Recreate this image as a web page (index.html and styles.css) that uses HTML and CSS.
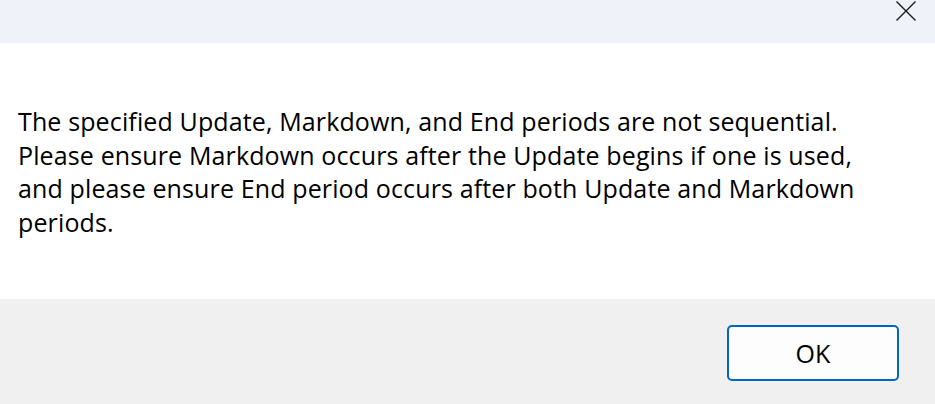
FILE: index.html
```html
<!DOCTYPE html>
<html>
<head>
<meta charset="utf-8">
<link rel="stylesheet" href="styles.css">
</head>
<body>
<div class="dialog">
  <div class="titlebar">
    <button class="close" aria-label="Close">
      <svg width="22" height="22" viewBox="0 0 22 22"><path d="M1.5 1.5 L20.5 20.5 M20.5 1.5 L1.5 20.5" stroke="#1b1b1b" stroke-width="1.4" fill="none"/></svg>
    </button>
  </div>
  <div class="content">
    <p class="message">The specified Update, Markdown, and End periods are not sequential.<br>Please ensure Markdown occurs after the Update begins if one is used,<br>and please ensure End period occurs after both Update and Markdown<br>periods.</p>
  </div>
  <div class="footer">
    <button class="ok">OK</button>
  </div>
</div>
</body>
</html>
```
FILE: styles.css
```css
html, body {
  margin: 0;
  padding: 0;
  width: 935px;
  height: 404px;
  overflow: hidden;
  background: #ffffff;
}
.dialog {
  display: flex;
  flex-direction: column;
  height: 404px;
  font-family: "Open Sans", "Noto Sans", sans-serif;
  color: #1a1a1a;
}
.titlebar {
  height: 43px;
  background: #eff3f9;
  display: flex;
  justify-content: flex-end;
  align-items: flex-start;
}
.close {
  border: none;
  background: transparent;
  padding: 0;
  margin: 0 18px 0 0;
  width: 22px;
  height: 22px;
  display: flex;
}
.content {
  height: 256px;
  background: #ffffff;
  padding: 0 0 0 18px;
  box-sizing: border-box;
}
.message {
  margin: 0;
  padding-top: 62px;
  font-size: 25px;
  letter-spacing: 0.13px;
  line-height: 33.7px;
  color: #000000;
}
.footer {
  flex: 1;
  background: #f0f0f0;
  display: flex;
  justify-content: flex-end;
  align-items: flex-start;
  padding: 26px 36px 0 0;
}
.ok {
  width: 172px;
  height: 56px;
  box-sizing: border-box;
  border: 2px solid #0067c0;
  border-radius: 5px;
  background: #fdfdfd;
  font-family: "Open Sans", "Noto Sans", sans-serif;
  font-size: 25px;
  color: #000000;
  padding: 0;
}
```
